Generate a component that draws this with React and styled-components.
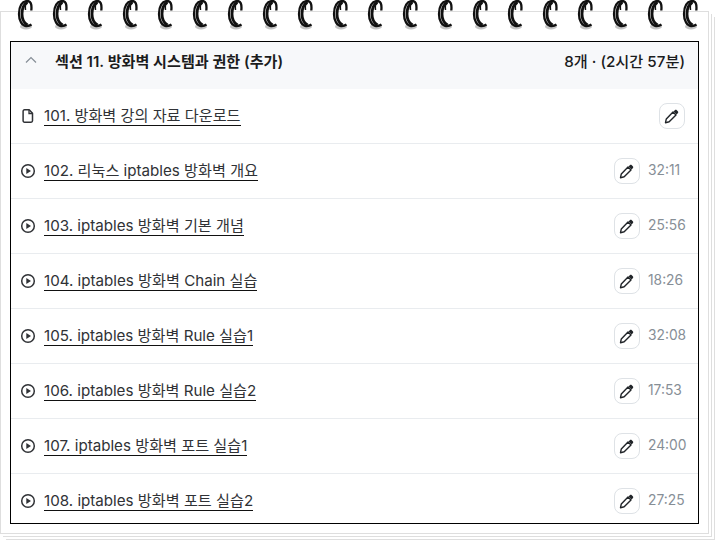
import React from 'react';
import styled, { createGlobalStyle } from 'styled-components';

const lectures = [
  { no: 101, title: '방화벽 강의 자료 다운로드', file: true },
  { no: 102, title: '리눅스 iptables 방화벽 개요', time: '32:11' },
  { no: 103, title: 'iptables 방화벽 기본 개념', time: '25:56' },
  { no: 104, title: 'iptables 방화벽 Chain 실습', time: '18:26' },
  { no: 105, title: 'iptables 방화벽 Rule 실습1', time: '32:08' },
  { no: 106, title: 'iptables 방화벽 Rule 실습2', time: '17:53' },
  { no: 107, title: 'iptables 방화벽 포트 실습1', time: '24:00' },
  { no: 108, title: 'iptables 방화벽 포트 실습2', time: '27:25' },
];

function Ring() {
  return (
    <svg width="16" height="30" viewBox="0 0 16 30">
      <ellipse cx="9" cy="26.500" rx="6" ry="3" fill="#c4c4c4" />
      <path d="M14.300 10.500C15 4 13.500 1 10.500 1 5 1 2 6.500 2 14c0 7 3 11.500 7 12 2 .2 4-.4 5.500-1.500" fill="none" stroke="#111" strokeWidth="2.300" />
      <path d="M10.500 2.500C7 4 5 8.500 5 14c0 5 2 9 5.500 11" fill="none" stroke="#111" strokeWidth="2.800" />
      <path d="M10.500 1.500C8.500 3.500 8 7 8.500 10" fill="none" stroke="#111" strokeWidth="1.500" />
    </svg>
  );
}

function FileIcon() {
  return (
    <svg width="16" height="16" viewBox="0 0 16 16">
      <path d="M4.500 1.800h4.700l3.300 3.400v7.600c0 .8-.6 1.400-1.400 1.400H4.500c-.8 0-1.400-.6-1.400-1.400V3.200c0-.8.6-1.400 1.400-1.400z" fill="none" stroke="#303236" strokeWidth="1.500" strokeLinejoin="round" />
      <path d="M9 2v3.500h3.500" fill="none" stroke="#303236" strokeWidth="1.300" />
    </svg>
  );
}

function PlayIcon() {
  return (
    <svg width="16" height="16" viewBox="0 0 16 16">
      <circle cx="8" cy="8" r="6.300" fill="none" stroke="#303236" strokeWidth="1.500" />
      <path d="M6.300 5.100v5.800L11 8z" fill="#303236" />
    </svg>
  );
}

function PencilIcon() {
  return (
    <svg width="16" height="16" viewBox="0 0 16 16">
      <path d="M10.800 2.200c.6-.6 1.400-.6 2 0l1 1c.6.6.6 1.400 0 2l-1.300 1.300-3-3z" fill="#212529" />
      <path d="M9 4l3 3-6.800 6.800-3.700.9.800-3.800z" fill="none" stroke="#212529" strokeWidth="1.400" strokeLinejoin="round" />
    </svg>
  );
}

export default function App() {
  return (
    <>
      <GlobalStyle />
      <Page>
        <Rings>
          {Array.from({ length: 20 }, (_, i) => <Ring key={i} />)}
        </Rings>
        <Sheet>
          <Frame>
            <SectionHeader>
              <Chevron width="14" height="14" viewBox="0 0 14 14">
                <path d="M2 9.500L7 4.500l5 5" fill="none" stroke="#868e96" strokeWidth="1.200" />
              </Chevron>
              <SectionTitle>섹션 11. 방화벽 시스템과 권한 (추가)</SectionTitle>
              <SectionInfo>8개 · (2시간 57분)</SectionInfo>
            </SectionHeader>
            {lectures.map((item) => (
              <Row key={item.no}>
                <RowIcon>{item.file ? <FileIcon /> : <PlayIcon />}</RowIcon>
                <RowTitle>{item.no}. {item.title}</RowTitle>
                <EditButton><PencilIcon /></EditButton>
                {item.time && <Duration>{item.time}</Duration>}
              </Row>
            ))}
          </Frame>
        </Sheet>
      </Page>
    </>
  );
}

const GlobalStyle = createGlobalStyle`
  html, body {
    margin: 0;
    background: #fff;
  }
  body {
    font-family: Inter, "Noto Sans CJK KR", sans-serif;
    overflow: hidden;
  }
`;

const Page = styled.div`
  position: relative;
  width: 715px;
  height: 541px;
  padding-top: 11px;
  box-sizing: border-box;
`;

const Rings = styled.div`
  position: absolute;
  top: 0;
  left: 17px;
  width: 681px;
  display: flex;
  justify-content: space-between;
  z-index: 2;
`;

const Sheet = styled.div`
  width: 709px;
  height: 523px;
  padding: 29px 0 0 9px;
  box-sizing: border-box;
  background: #fff;
  border: 1px solid #dedede;
  box-shadow:
    2px 2px 0 #fff, 3px 3px 0 #dedede,
    5px 5px 0 #fff, 6px 6px 0 #dedede;
`;

const Frame = styled.div`
  height: 483px;
  width: 689px;
  box-sizing: border-box;
  border: 1px solid #000;
  overflow: hidden;
  background: #fff;
`;

const SectionHeader = styled.div`
  height: 47px;
  display: flex;
  align-items: center;
  padding: 0 13px 11px 13px;
  background: #f7f8fa;
  color: #1b1c1d;
  box-sizing: border-box;
`;

const Chevron = styled.svg`
  flex: none;
  margin-right: 17px;
`;

const SectionTitle = styled.div`
  flex: 1;
  font-size: 15.100px;
  font-weight: 600;
`;

const SectionInfo = styled.div`
  font-size: 15.200px;
  font-weight: 500;
`;

const Row = styled.div`
  height: 55px;
  display: flex;
  align-items: center;
  padding: 0 13px 0 9px;
  border-bottom: 1px solid #e9ecef;
  box-sizing: border-box;
  color: #303236;
`;

const RowIcon = styled.div`
  width: 16px;
  height: 16px;
  flex: none;
  margin-right: 8px;
`;

const RowTitle = styled.div`
  font-size: 15.150px;
  line-height: 18px;
  white-space: nowrap;
  border-bottom: 1px solid #111;
  margin-right: auto;
`;

const EditButton = styled.div`
  width: 26px;
  height: 26px;
  flex: none;
  display: flex;
  align-items: center;
  justify-content: center;
  box-sizing: border-box;
  border: 1px solid #dee2e6;
  border-radius: 8px;
  background: #fff;
`;

const Duration = styled.div`
  width: 37px;
  margin: -2px 0 0 8px;
  font-size: 13.800px;
  color: #868e96;
  white-space: nowrap;
`;
